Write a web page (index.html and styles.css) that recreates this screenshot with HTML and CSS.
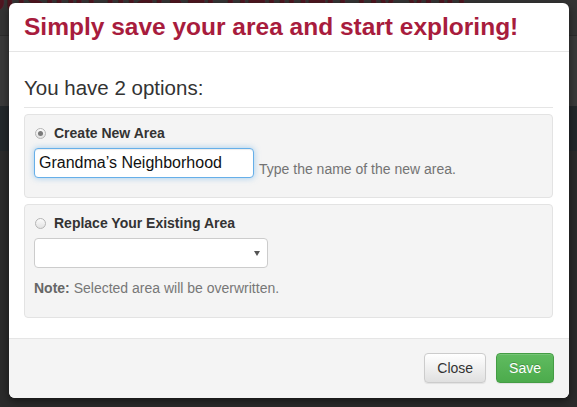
FILE: index.html
```html
<!DOCTYPE html>
<html>
<head>
<meta charset="utf-8">
<link rel="stylesheet" href="styles.css">
</head>
<body>
<div class="page">
  <div class="page-top"><h1 class="page-title">Housing market defined by you</h1></div>
  <div class="page-band"></div>
  <div class="page-dark"></div>
  <div class="page-map"></div>
</div>

<div class="modal">
  <div class="modal-header">
    <h4 class="modal-title">Simply save your area and start exploring!</h4>
  </div>
  <div class="modal-body">
    <p class="legend">You have 2 options:</p>

    <div class="well">
      <label class="radio-row">
        <span class="radio checked"></span>
        <span class="radio-label">Create New Area</span>
      </label>
      <div class="input-row">
        <input class="text-input" type="text" value="Grandma’s Neighborhood">
        <span class="hint">Type the name of the new area.</span>
      </div>
    </div>

    <div class="well">
      <label class="radio-row">
        <span class="radio"></span>
        <span class="radio-label">Replace Your Existing Area</span>
      </label>
      <div class="select-box"><span class="arrow"></span></div>
      <p class="note"><b>Note:</b> Selected area will be overwritten.</p>
    </div>
  </div>
  <div class="modal-footer">
    <button class="btn btn-default">Close</button>
    <button class="btn btn-success">Save</button>
  </div>
</div>
</body>
</html>
```

FILE: styles.css
```css
html, body {
  margin: 0;
  padding: 0;
}
body {
  width: 577px;
  height: 407px;
  overflow: hidden;
  background: #262a2c;
  font-family: "Liberation Sans", Arial, sans-serif;
  position: relative;
}

/* dimmed page behind the modal */
.page-top {
  height: 35px;
  background: #343434;
  overflow: hidden;
}
.page-title {
  margin: -20px 0 0 -40px;
  font-size: 34px;
  font-weight: bold;
  color: #4e1620;
  white-space: nowrap;
}
.page-band {
  height: 70px;
  background: #3a3a3a;
  border-top: 1px solid #2c2c2c;
}
.page-dark {
  height: 45px;
  background: #23282b;
}
.page-map {
  height: 256px;
  background: #2b2b2b;
}

/* modal */
.modal {
  position: absolute;
  left: 9px;
  top: 3px;
  width: 560px;
  background: #fff;
  border-radius: 6px;
  overflow: hidden;
  box-shadow: 0 3px 9px rgba(0,0,0,.5);
}
.modal-header {
  height: 48px;
  padding: 0 15px;
  border-bottom: 1px solid #e5e5e5;
  display: flex;
  align-items: center;
}
.modal-title {
  margin: 0;
  font-size: 24.5px;
  font-weight: bold;
  color: #a81c3d;
  line-height: 1;
}
.modal-body {
  padding: 15px 16px 14px 15px;
}
.legend {
  margin: 10px 0 6px;
  font-size: 20.5px;
  line-height: 22px;
  color: #333;
  padding-bottom: 8px;
  border-bottom: 1px solid #e5e5e5;
}
.well {
  background: #f4f4f4;
  border: 1px solid #e3e3e3;
  border-radius: 4px;
  padding: 9px;
  margin-bottom: 6px;
}
.radio-row {
  display: flex;
  align-items: center;
  height: 18px;
  margin-bottom: 6px;
}
.radio {
  width: 11px;
  height: 11px;
  border-radius: 50%;
  border: 1px solid #b5b5b5;
  background: linear-gradient(#fbfbfb, #e2e2e2);
  margin: 0 8px 0 1px;
  position: relative;
  box-sizing: border-box;
  flex: none;
}
.radio.checked::after {
  content: "";
  position: absolute;
  left: 2px;
  top: 2px;
  width: 5px;
  height: 5px;
  border-radius: 50%;
  background: #7a7a7a;
}
.radio-label {
  font-size: 14px;
  font-weight: bold;
  color: #333;
}
.input-row {
  display: flex;
  align-items: flex-end;
  margin-bottom: 10px;
}
.text-input {
  width: 220px;
  height: 30px;
  box-sizing: border-box;
  border: 1px solid #66afe9;
  border-radius: 4px;
  padding: 0 4px;
  font-family: "Liberation Sans", Arial, sans-serif;
  font-size: 16px;
  color: #111;
  background: #fff;
  outline: none;
  box-shadow: inset 0 1px 1px rgba(0,0,0,.075), 0 0 6px rgba(102,175,233,.6);
}
.hint {
  margin-left: 5px;
  font-size: 14px;
  line-height: 18px;
  color: #737373;
}
.select-box {
  position: relative;
  width: 234px;
  height: 30px;
  box-sizing: border-box;
  border: 1px solid #ccc;
  border-radius: 4px;
  background: #fff;
}
.arrow {
  position: absolute;
  right: 7px;
  top: 12px;
  width: 0;
  height: 0;
  border-left: 3px solid transparent;
  border-right: 3px solid transparent;
  border-top: 5px solid #555;
}
.note {
  margin: 11px 0 11px;
  font-size: 14px;
  line-height: 18px;
  color: #777;
}
.note b {
  color: #666;
}
.modal-footer {
  border-top: 1px solid #e5e5e5;
  background: #f4f4f4;
  padding: 14px 15px 15px;
  display: flex;
  justify-content: flex-end;
  gap: 10px;
}
.btn {
  height: 30px;
  padding: 0 12px;
  font-family: "Liberation Sans", Arial, sans-serif;
  font-size: 14px;
  border-radius: 4px;
  cursor: pointer;
}
.btn-default {
  color: #333;
  border: 1px solid #ccc;
  background: linear-gradient(#fff, #e0e0e0);
  box-shadow: inset 0 1px 0 rgba(255,255,255,.15), 0 1px 1px rgba(0,0,0,.075);
}
.btn-success {
  color: #fff;
  border: 1px solid #449d44;
  background: linear-gradient(#60bb60, #4cab4c);
  text-shadow: 0 -1px 0 rgba(0,0,0,.2);
  box-shadow: inset 0 1px 0 rgba(255,255,255,.15), 0 1px 1px rgba(0,0,0,.075);
}
```
